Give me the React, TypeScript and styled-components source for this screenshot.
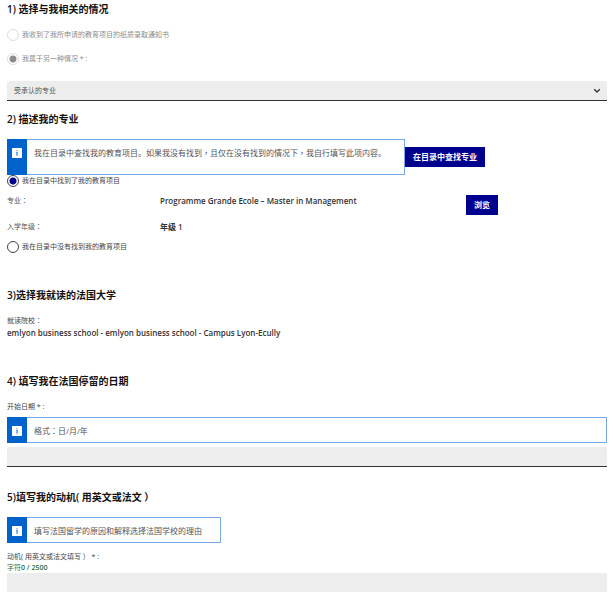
import React, { useState } from "react";
import styled, { createGlobalStyle } from "styled-components";

const GlobalStyle = createGlobalStyle`
  *, *::before, *::after { box-sizing: border-box; }
  body {
    margin: 0;
    background: #fff;
    color: #333;
    font-family: "Open Sans", "Noto Sans CJK SC", sans-serif;
    font-size: 8px;
    line-height: 12px;
  }
  button, input, select, textarea { font: inherit; color: inherit; margin: 0; }
`;

const Form = styled.form`
  padding: 2px 6px 0 7px;
`;

const Section = styled.section<{ $space?: number }>`
  display: flex;
  flex-direction: column;
  margin-bottom: ${(p) => p.$space ?? 0}px;
`;

const Title = styled.h2`
  margin: 0 0 13px;
  color: #111;
  font-size: 10px;
  line-height: 14px;
  font-weight: 600;
`;

/* Full-width punctuation centred in its cell, as in Traditional Chinese setting */
const Wide = styled.span.attrs({ lang: "zh-Hant" })`
  font-family: "Noto Sans CJK TC", sans-serif;
  line-height: 1;
`;

const Choice = styled.label<{ $muted?: boolean }>`
  display: flex;
  align-items: center;
  gap: 3px;
  height: 12px;
  font-size: 7px;
  color: ${(p) => (p.$muted ? "#8c8c8c" : "#444")};
`;

const Radio = styled.input.attrs({ type: "radio" })`
  appearance: none;
  flex: none;
  width: 12px;
  height: 12px;
  border: 1px solid #444;
  border-radius: 50%;
  background: #fff;

  &:checked {
    background: radial-gradient(circle, #00008c 0 3px, #fff 4px);
  }
  &:disabled {
    border-color: #ddd;
  }
  &:disabled:checked {
    background: radial-gradient(circle, #8c8c8c 0 3px, #fff 4px);
  }
`;

const Choices = styled.div`
  display: flex;
  flex-direction: column;
  gap: 12px;
  margin: 0 0 16px;
`;

const SelectBox = styled.div`
  display: grid;
  align-items: center;
  background: #ededed;
  border-bottom: 1px solid #333;
  border-radius: 2px 2px 0 0;

  > * { grid-area: 1 / 1; }
  svg { justify-self: end; margin-right: 6px; pointer-events: none; }
`;

const Select = styled.select`
  appearance: none;
  width: 100%;
  height: 19px;
  padding: 0 20px 0 7px;
  border: 0;
  background: transparent;
  font-size: 7px;
  color: #555;
`;

const NoteRow = styled.div`
  display: flex;
  align-items: center;
`;

const NoteBox = styled.div<{ $fill?: boolean; $tall?: boolean }>`
  display: flex;
  width: ${(p) => (p.$fill ? "auto" : "fit-content")};
  border: 1px solid #77aae4;
  border-left: 0;
  min-height: ${(p) => (p.$tall ? 36 : 26)}px;
`;

const NoteMark = styled.span`
  flex: none;
  width: 20px;
  margin: -1px 0;
  padding-top: 9px;
  background: #0063cb;
  text-align: center;

  svg { display: block; margin: 0 auto; }
`;

const NoteText = styled.p`
  margin: 0;
  padding: 7px 18px 5px 7px;
  color: #555;
`;

const Button = styled.button`
  display: block;
  flex: none;
  height: 20px;
  padding: 0 8px;
  border: 0;
  background: #00008f;
  color: #fff;
  font-weight: 600;
  white-space: nowrap;
`;

const Details = styled.dl`
  display: grid;
  grid-template-columns: 51fr 102fr 47fr;
  row-gap: 6px;
  align-items: start;
  margin: 8px 0;
`;

const Term = styled.dt`
  font-size: 7px;
  color: #555;
`;

const Value = styled.dd<{ $wide?: boolean }>`
  margin: 0;
  font-weight: 600;
  white-space: nowrap;
  grid-column: ${(p) => (p.$wide ? "span 2" : "auto")};
`;

const Label = styled.label<{ $above?: number; $below?: number }>`
  margin: ${(p) => p.$above ?? 0}px 0 ${(p) => p.$below ?? 0}px;
  font-size: 7px;
  color: #444;
`;

const School = styled.output`
  font-weight: 600;
`;

const DateInput = styled.input`
  width: 100%;
  height: 20px;
  margin-top: 4px;
  padding: 0 7px;
  border: 0;
  border-bottom: 1px solid #333;
  border-radius: 2px 2px 0 0;
  background: #ededed;
`;

const Counter = styled.span`
  font-size: 7px;
  line-height: 10px;
  font-weight: 600;
  color: #2b7048;
`;

const CounterWord = styled.span`
  font-weight: 400;
`;

const Motivation = styled.textarea`
  display: block;
  width: 100%;
  height: 19px;
  padding: 2px 7px;
  border: 0;
  border-radius: 2px 2px 0 0;
  background: #ededed;
  resize: none;
`;

const InfoIcon = () => (
  <svg width="10" height="10" viewBox="0 0 10 10" aria-hidden="true">
    <rect width="10" height="10" rx="0.8" fill="#fff" />
    <path d="M4.4 2.2h1.3v1.1H4.4zM4.1 4.1h1.6v3.6H4.4V5h-.3z" fill="#4189d8" />
  </svg>
);

const Note = ({
  children,
  fill,
  tall,
}: {
  children: React.ReactNode;
  fill?: boolean;
  tall?: boolean;
}) => (
  <NoteBox $fill={fill} $tall={tall}>
    <NoteMark>
      <InfoIcon />
    </NoteMark>
    <NoteText>{children}</NoteText>
  </NoteBox>
);

export default function App() {
  const [source, setSource] = useState("found");
  const [text, setText] = useState("");

  return (
    <>
      <GlobalStyle />
      <Form lang="zh-Hans">
        <Section $space={11}>
          <Title>1) 选择与我相关的情况</Title>
          <Choices>
            <Choice $muted>
              <Radio name="situation" disabled />
              我收到了我所申请的教育项目的纸质录取通知书
            </Choice>
            <Choice $muted>
              <Radio name="situation" disabled defaultChecked />
              我属于另一种情况 * :
            </Choice>
          </Choices>
          <SelectBox>
            <Select aria-label="我属于另一种情况">
              <option>受承认的专业</option>
            </Select>
            <svg width="8" height="6" viewBox="0 0 8 6" aria-hidden="true">
              <path d="M1.2 1.2 4 4l2.8-2.8" fill="none" stroke="#333" strokeWidth="1.3" />
            </svg>
          </SelectBox>
        </Section>

        <Section $space={35}>
          <Title>2) 描述我的专业</Title>
          <NoteRow>
            <Note tall>
              我在目录中查找我的教育项目。如果我没有找到<Wide>，</Wide>
              且仅在没有找到的情况下<Wide>，</Wide>我自行填写此项内容。
            </Note>
            <Button type="button">在目录中查找专业</Button>
          </NoteRow>
          <Choice>
            <Radio
              name="source"
              checked={source === "found"}
              onChange={() => setSource("found")}
            />
            我在目录中找到了我的教育项目
          </Choice>
          <Details>
            <Term>专业<Wide>：</Wide></Term>
            <Value>Programme Grande Ecole – Master in Management</Value>
            <Value>
              <Button type="button">浏览</Button>
            </Value>
            <Term>入学年级<Wide>：</Wide></Term>
            <Value $wide>年级 1</Value>
          </Details>
          <Choice>
            <Radio
              name="source"
              checked={source === "missing"}
              onChange={() => setSource("missing")}
            />
            我在目录中没有找到我的教育项目
          </Choice>
        </Section>

        <Section $space={35}>
          <Title>3)选择我就读的法国大学</Title>
          <Label htmlFor="school">就读院校<Wide>：</Wide></Label>
          <School id="school">
            emlyon business school - emlyon business school - Campus Lyon-Ecully
          </School>
        </Section>

        <Section $space={23}>
          <Title>4) 填写我在法国停留的日期</Title>
          <Label htmlFor="start" $below={4}>开始日期 * :</Label>
          <Note fill>格式<Wide>：</Wide>日/月/年</Note>
          <DateInput id="start" type="text" />
        </Section>

        <Section>
          <Title>5)填写我的动机( 用英文或法文 ）</Title>
          <Note>填写法国留学的原因和解释选择法国学校的理由</Note>
          <Label htmlFor="motivation" $above={8}>
            动机( 用英文或法文填写 ） * :
          </Label>
          <Counter>
            <CounterWord>字符</CounterWord>
            {text.length} / 2500
          </Counter>
          <Motivation
            id="motivation"
            maxLength={2500}
            value={text}
            onChange={(e) => setText(e.target.value)}
          />
        </Section>
      </Form>
    </>
  );
}
